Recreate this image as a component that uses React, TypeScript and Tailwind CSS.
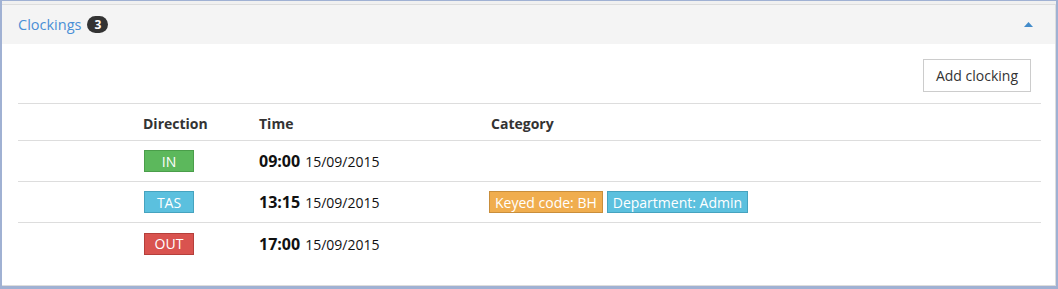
import React from "react";

const rows = [
  { dir: "IN", cls: "bg-[#5cb85c] border-[#4a9e4a]", time: "09:00", date: "15/09/2015", cats: [] as { t: string; c: string }[] },
  {
    dir: "TAS",
    cls: "bg-[#5bc0de] border-[#46a3bf]",
    time: "13:15",
    date: "15/09/2015",
    cats: [
      { t: "Keyed code: BH", c: "bg-[#f0ad4e] border-[#c98e3b]" },
      { t: "Department: Admin", c: "bg-[#5bc0de] border-[#46a3bf]" },
    ],
  },
  { dir: "OUT", cls: "bg-[#d9534f] border-[#b53f3b]", time: "17:00", date: "15/09/2015", cats: [] },
];

export default function App() {
  return (
    <div
      className="w-[1058px] h-[289px] bg-[#a0b1d3] pt-px pl-[2px] pr-[2px] pb-[3px]"
      style={{ fontFamily: "'Open Sans', 'Noto Sans', sans-serif" }}
    >
      <div className="h-full bg-[#f0f0f0] pt-[3px] flex flex-col">
        <div className="flex-1 flex flex-col border-t border-b border-r border-[#dddddd] bg-white">
          <div className="h-[39px] bg-[#f4f4f4] flex items-center pl-4 pr-[22px]">
            <span className="text-[14.5px] text-[#4a8fd6]">Clockings</span>
            <span className="ml-[6px] h-[17px] min-w-[21px] rounded-full bg-[#333333] text-white text-[12px] font-bold flex items-center justify-center leading-none">
              3
            </span>
            <span className="ml-auto">
              <svg width="9" height="5" viewBox="0 0 9 5">
                <polygon points="0,5 4.5,0 9,5" fill="#428bca" />
              </svg>
            </span>
          </div>
          <div className="flex-1 pl-4 pr-[14px] pt-[15px]">
            <div className="flex justify-end pr-[10px]">
              <button className="h-[33px] px-[12px] border border-[#cccccc] bg-white text-[14px] text-[#333333]">
                Add clocking
              </button>
            </div>
            <div className="mt-[11px] border-t border-[#dddddd]">
              <div className="flex h-[37px] items-center pt-[3px] text-[14px] font-bold text-[#333333] border-b border-[#dddddd]">
                <div className="w-[125px]" />
                <div className="w-[116px]">Direction</div>
                <div className="w-[232px]">Time</div>
                <div>Category</div>
              </div>
              {rows.map((r, i) => (
                <div
                  key={i}
                  className={`flex h-[41px] items-center text-[#111111] ${i < rows.length - 1 ? "border-b border-[#dddddd]" : ""}`}
                >
                  <div className="w-[126px]" />
                  <div className="w-[115px]">
                    <span className={`w-[50px] h-[22px] border ${r.cls} text-white text-[14px] flex items-center justify-center`}>
                      {r.dir}
                    </span>
                  </div>
                  <div className="w-[230px] flex items-baseline">
                    <span className="text-[16px] font-bold">{r.time}</span>
                    <span className="ml-[5px] text-[14px]">{r.date}</span>
                  </div>
                  <div className="flex gap-[4px]">
                    {r.cats.map((c, j) => (
                      <span key={j} className={`h-[22px] px-[5px] border ${c.c} text-white text-[14px] flex items-center`}>
                        {c.t}
                      </span>
                    ))}
                  </div>
                </div>
              ))}
            </div>
          </div>
        </div>
      </div>
    </div>
  );
}
